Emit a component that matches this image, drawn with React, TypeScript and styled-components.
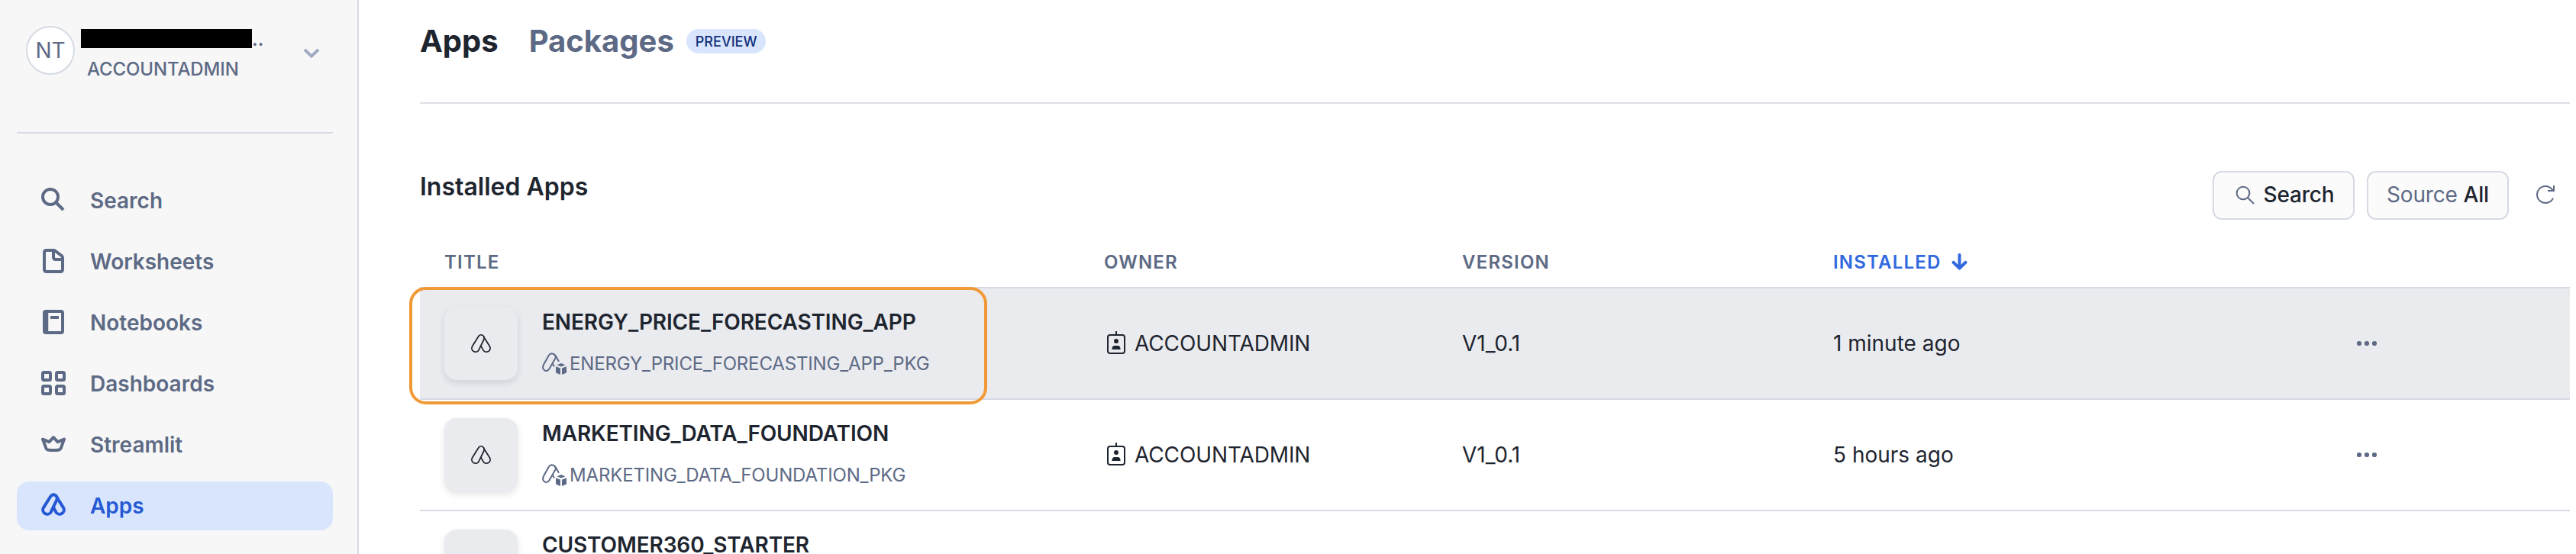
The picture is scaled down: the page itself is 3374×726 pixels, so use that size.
import React from "react";
import styled, { createGlobalStyle } from "styled-components";

const GlobalStyle = createGlobalStyle`
  * { box-sizing: border-box; }
  html, body { margin: 0; padding: 0; height: 726px; overflow: hidden; background: #fff; }
  body { font-family: Inter, "Liberation Sans", sans-serif; color: #1e252f; font-size: 28px; line-height: 40px; }
  svg { display: block; flex: none; }
`;

const Page = styled.div`
  display: flex;
  width: 3374px;
  height: 726px;
  overflow: hidden;
`;

const Sidebar = styled.aside`
  width: 470px;
  flex: none;
  padding: 0 32px 0 22px;
  background: #f7f7f7;
  border-right: 2px solid #d5dae4;
  color: #5d6a85;
`;

const Account = styled.div`
  display: flex;
  height: 175px;
  padding: 34px 16px 0 12px;
  border-bottom: 2px solid #d5dae4;
`;

const Avatar = styled.div`
  display: flex;
  align-items: center;
  justify-content: center;
  width: 64px;
  height: 64px;
  border: 2px solid #d5dae4;
  border-radius: 50%;
  background: #fff;
`;

const Identity = styled.div`
  flex: 1;
  padding: 4px 0 0 8px;
`;

const UserName = styled.div`
  display: flex;
  height: 25px;
  font-size: 24px;
  font-weight: 600;
  line-height: 28px;
`;

const Redaction = styled.span`
  width: 224px;
  height: 25px;
  background: #000;
`;

const Role = styled.div`
  padding: 8px 0 0 8px;
  font-size: 24px;
  font-weight: 500;
  letter-spacing: -0.12px;
`;

const AccountToggle = styled.div`
  padding-top: 28px;
`;

const Nav = styled.nav`
  display: flex;
  flex-direction: column;
  gap: 16px;
  padding-top: 56px;
`;

const NavItem = styled.a<{ $active?: boolean }>`
  display: flex;
  align-items: center;
  gap: 32px;
  height: 64px;
  padding-left: 32px;
  border-radius: 16px;
  font-weight: 600;
  background: ${(p) => (p.$active ? "#d9e5fd" : "transparent")};
  color: ${(p) => (p.$active ? "#2559d4" : "inherit")};

  svg { margin-bottom: 2px; }
`;

const Main = styled.main`
  flex: 1;
  padding: 0 8px 0 80px;
`;

const Tabs = styled.header`
  display: flex;
  align-items: center;
  height: 136px;
  padding-bottom: 26px;
  border-bottom: 2px solid #dce0e5;
`;

const Tab = styled.h1<{ $muted?: boolean }>`
  margin: 0 40px 0 0;
  font-size: 40px;
  line-height: 48px;
  font-weight: 700;
  color: ${(p) => (p.$muted ? "#5d6a85" : "#1e252f")};
  & + & { margin-right: 16px; }
`;

const Pill = styled.span`
  height: 32px;
  padding: 0 12px;
  border-radius: 16px;
  background: #d9e5fd;
  color: #102e7a;
  font-size: 18px;
  font-weight: 500;
  line-height: 33px;
`;

const Toolbar = styled.div`
  display: flex;
  height: 176px;
  padding-top: 88px;
`;

const Heading = styled.h2`
  flex: 1;
  margin: 0;
  font-size: 32px;
  font-weight: 600;
  line-height: 42px;
`;

const Button = styled.button`
  display: flex;
  align-items: center;
  justify-content: center;
  gap: 8px;
  width: 186px;
  height: 64px;
  margin-right: 16px;
  padding: 0 0 3px;
  border: 2px solid #d5dae4;
  border-radius: 12px;
  background: #fbfbfb;
  color: #1e252f;
  font: 500 28px Inter, sans-serif;
  letter-spacing: -0.2px;

  svg { margin-top: 2px; }
`;

const Muted = styled.span`
  font-weight: 400;
  color: #5d6a85;
`;

const Refresh = styled.div`
  width: 64px;
  padding: 16px;
`;

const columns = `
  display: grid;
  grid-template-columns: 896px 469px 486px 683px 1fr;
  align-items: center;
`;

const TableHead = styled.div`
  ${columns}
  height: 66px;
  border-bottom: 2px solid #d5dae4;
  color: #5d6a85;
  font-size: 24px;
  font-weight: 600;
  letter-spacing: 1.2px;
`;

const HeadCell = styled.div<{ $indent?: boolean; $sorted?: boolean }>`
  display: flex;
  align-items: center;
  gap: 8px;
  padding-left: ${(p) => (p.$indent ? "32px" : "0")};
  color: ${(p) => (p.$sorted ? "#3169e0" : "inherit")};
`;

const Row = styled.div<{ $selected?: boolean }>`
  ${columns}
  position: relative;
  height: 146px;
  border-bottom: 2px solid #d5dae4;
  background: ${(p) => (p.$selected ? "#eaebef" : "#fff")};
`;

const Outline = styled.div`
  position: absolute;
  left: -14px;
  top: -2px;
  width: 757px;
  height: 154px;
  border: 4px solid #f19937;
  border-radius: 22px;
  z-index: 1;
`;

const AppCell = styled.div`
  display: flex;
  gap: 32px;
  padding-left: 32px;
`;

const Tile = styled.div`
  display: flex;
  align-items: center;
  justify-content: center;
  width: 96px;
  height: 96px;
  border-radius: 16px;
  background: #eaebef;
  box-shadow: 0 4px 8px rgba(30, 37, 47, 0.12);
`;

const AppName = styled.div`
  font-weight: 600;
  letter-spacing: -0.12px;
`;

const PackageName = styled.div`
  display: flex;
  align-items: center;
  gap: 4px;
  padding-top: 15px;
  font-size: 24px;
  letter-spacing: -0.16px;
  color: #5d6a85;
`;

const Owner = styled.div`
  display: flex;
  align-items: center;
  gap: 8px;
  letter-spacing: -0.12px;
`;

const AppsPaths = () => (
  <>
    <path d="M12.1 4.7 2.8 19.6A5.65 5.65 0 0 0 12.6 25.2L20.3 9.3A4.7 4.7 0 0 0 12.1 4.7Z" />
    <path d="M19.9 4.9 29.2 19.6A5.65 5.65 0 0 1 19.4 25.2L15.8 18.6" />
  </>
);

const AppsGlyph = () => (
  <svg width="32" height="32" viewBox="0 0 32 32" fill="none" stroke="currentColor" strokeWidth="4">
    <AppsPaths />
  </svg>
);

const TileGlyph = () => (
  <svg width="28" height="28" viewBox="0 -1 32 32" fill="none" stroke="currentColor" strokeWidth="2">
    <AppsPaths />
  </svg>
);

const PackageGlyph = () => (
  <svg width="32" height="32" viewBox="0 0 32 32" fill="none" stroke="currentColor" strokeWidth="2">
    <path d="M8.8 4.8 1.8 17.2Q.2 21 2.2 23.4Q4.5 26 7.8 24.2Q9 23.4 9.8 21.8L17.4 8.6Q18.6 6.4 16.6 4Q14.8 2.2 12.4 2.2Q10 2.4 8.8 4.8Z" />
    <path d="M17.4 4.8 22 12.8M13.4 15.2 16 19.6" />
    <path d="M25 14.9 30.4 17.2 25 19.6 19.4 17.2ZM18 19.2 24 21.6V30L18 27.4ZM32 19.2V27.4L26 30V21.6Z" fill="currentColor" stroke="none" />
  </svg>
);

const SearchGlyph = () => (
  <svg width="32" height="32" viewBox="0 0 32 32" fill="none" stroke="currentColor" strokeWidth="4">
    <circle cx="12" cy="12" r="10" />
    <path d="M19 19 29 29" />
  </svg>
);

const WorksheetGlyph = () => (
  <svg width="32" height="32" viewBox="0 0 32 32" fill="none" stroke="currentColor" strokeWidth="4" strokeLinejoin="round">
    <path d="M7 2H16Q17.4 2 18.4 2.8L26.6 9Q28 10 28 11.8V27Q28 30 25 30H7Q4 30 4 27V5Q4 2 7 2Z" />
    <path d="M16 2V11Q16 14 19 14H28" />
  </svg>
);

const NotebookGlyph = () => (
  <svg width="32" height="32" viewBox="0 0 32 32" fill="none" stroke="currentColor" strokeWidth="4">
    <rect x="4" y="2" width="24" height="28" rx="2" />
    <path d="M7.5 2V30" strokeWidth="3.5" />
    <path d="M12 10H23" />
  </svg>
);

const DashboardGlyph = () => (
  <svg width="32" height="32" viewBox="0 0 32 32" fill="none" stroke="currentColor" strokeWidth="4">
    <rect x="2" y="2" width="10" height="10" rx="1.5" />
    <rect x="20" y="2" width="10" height="10" rx="1.5" />
    <rect x="2" y="20" width="10" height="10" rx="1.5" />
    <rect x="20" y="20" width="10" height="10" rx="1.5" />
  </svg>
);

const CrownGlyph = () => (
  <svg width="32" height="32" viewBox="0 0 32 32" fill="none" stroke="currentColor" strokeWidth="4" strokeLinejoin="round">
    <path d="M2 9.6 10.4 13.2 16 7.2 21.6 13.2 30 9.6 25.6 21.6Q25 23.2 23.6 23.4Q16 24.6 8.4 23.4Q7 23.2 6.4 21.6Z" />
  </svg>
);

const BadgeGlyph = () => (
  <svg width="32" height="32" viewBox="0 0 32 32" fill="none" stroke="currentColor" strokeWidth="2">
    <rect x="5" y="5" width="22" height="24" rx="3" />
    <path d="M16 0V5" />
    <circle cx="16" cy="13" r="3" fill="currentColor" stroke="none" />
    <path d="M10.4 24Q10.4 19 14 19H18Q21.6 19 21.6 24Z" fill="currentColor" stroke="none" />
  </svg>
);

const DotsGlyph = () => (
  <svg width="32" height="32" viewBox="0 0 32 32" fill="#5d6a85">
    <circle cx="6" cy="16" r="3.1" />
    <circle cx="16" cy="16" r="3.1" />
    <circle cx="26" cy="16" r="3.1" />
  </svg>
);

const navItems = [
  { label: "Search", icon: <SearchGlyph /> },
  { label: "Worksheets", icon: <WorksheetGlyph /> },
  { label: "Notebooks", icon: <NotebookGlyph /> },
  { label: "Dashboards", icon: <DashboardGlyph /> },
  { label: "Streamlit", icon: <CrownGlyph /> },
  { label: "Apps", icon: <AppsGlyph />, active: true },
];

type AppEntry = {
  name: string;
  pkg?: string;
  owner?: string;
  version?: string;
  installed?: string;
  selected?: boolean;
};

const apps: AppEntry[] = [
  {
    name: "ENERGY_PRICE_FORECASTING_APP",
    pkg: "ENERGY_PRICE_FORECASTING_APP_PKG",
    owner: "ACCOUNTADMIN",
    version: "V1_0.1",
    installed: "1 minute ago",
    selected: true,
  },
  {
    name: "MARKETING_DATA_FOUNDATION",
    pkg: "MARKETING_DATA_FOUNDATION_PKG",
    owner: "ACCOUNTADMIN",
    version: "V1_0.1",
    installed: "5 hours ago",
  },
  { name: "CUSTOMER360_STARTER" },
];

export default function App() {
  return (
    <Page>
      <GlobalStyle />
      <Sidebar>
        <Account>
          <Avatar>NT</Avatar>
          <Identity>
            <UserName>
              <Redaction />
              ..
            </UserName>
            <Role>ACCOUNTADMIN</Role>
          </Identity>
          <AccountToggle>
            <svg width="24" height="16" viewBox="0 0 24 16" fill="none" stroke="#a0abc1" strokeWidth="4">
              <path d="M3 3 12 11.6 21 3" />
            </svg>
          </AccountToggle>
        </Account>
        <Nav>
          {navItems.map((item) => (
            <NavItem key={item.label} $active={item.active}>
              {item.icon}
              {item.label}
            </NavItem>
          ))}
        </Nav>
      </Sidebar>
      <Main>
        <Tabs>
          <Tab>Apps</Tab>
          <Tab $muted>Packages</Tab>
          <Pill>PREVIEW</Pill>
        </Tabs>
        <Toolbar>
          <Heading>Installed Apps</Heading>
          <Button>
            <svg width="32" height="32" viewBox="0 0 32 32" fill="none" stroke="#5d6a85" strokeWidth="2">
              <circle cx="13" cy="13" r="8.3" />
              <path d="M19 19 27 27" />
            </svg>
            Search
          </Button>
          <Button>
            <Muted>Source</Muted>All
          </Button>
          <Refresh>
            <svg width="32" height="32" viewBox="0 0 32 32" fill="none" stroke="#5d6a85" strokeWidth="2">
              <path d="M26 19.6A11 11 0 1 1 24.5 8L26.5 10" />
              <path d="M27 3V10H19" />
            </svg>
          </Refresh>
        </Toolbar>
        <TableHead>
          <HeadCell $indent>TITLE</HeadCell>
          <HeadCell>OWNER</HeadCell>
          <HeadCell>VERSION</HeadCell>
          <HeadCell $sorted>
            INSTALLED
            <svg width="32" height="32" viewBox="0 0 32 32" fill="none" stroke="currentColor" strokeWidth="4" strokeLinecap="round" strokeLinejoin="round">
              <path d="M15.5 6V23M7.5 15.8 15.5 23.6 23.5 15.8" />
            </svg>
          </HeadCell>
        </TableHead>
        {apps.map((app) => (
          <Row key={app.name} $selected={app.selected}>
            <AppCell>
              <Tile>
                <TileGlyph />
              </Tile>
              <div>
                <AppName>{app.name}</AppName>
                {app.pkg && (
                  <PackageName>
                    <PackageGlyph />
                    {app.pkg}
                  </PackageName>
                )}
              </div>
            </AppCell>
            {app.owner && (
              <>
                <Owner>
                  <BadgeGlyph />
                  {app.owner}
                </Owner>
                <div>{app.version}</div>
                <div>{app.installed}</div>
                <DotsGlyph />
              </>
            )}
            {app.selected && <Outline />}
          </Row>
        ))}
      </Main>
    </Page>
  );
}
